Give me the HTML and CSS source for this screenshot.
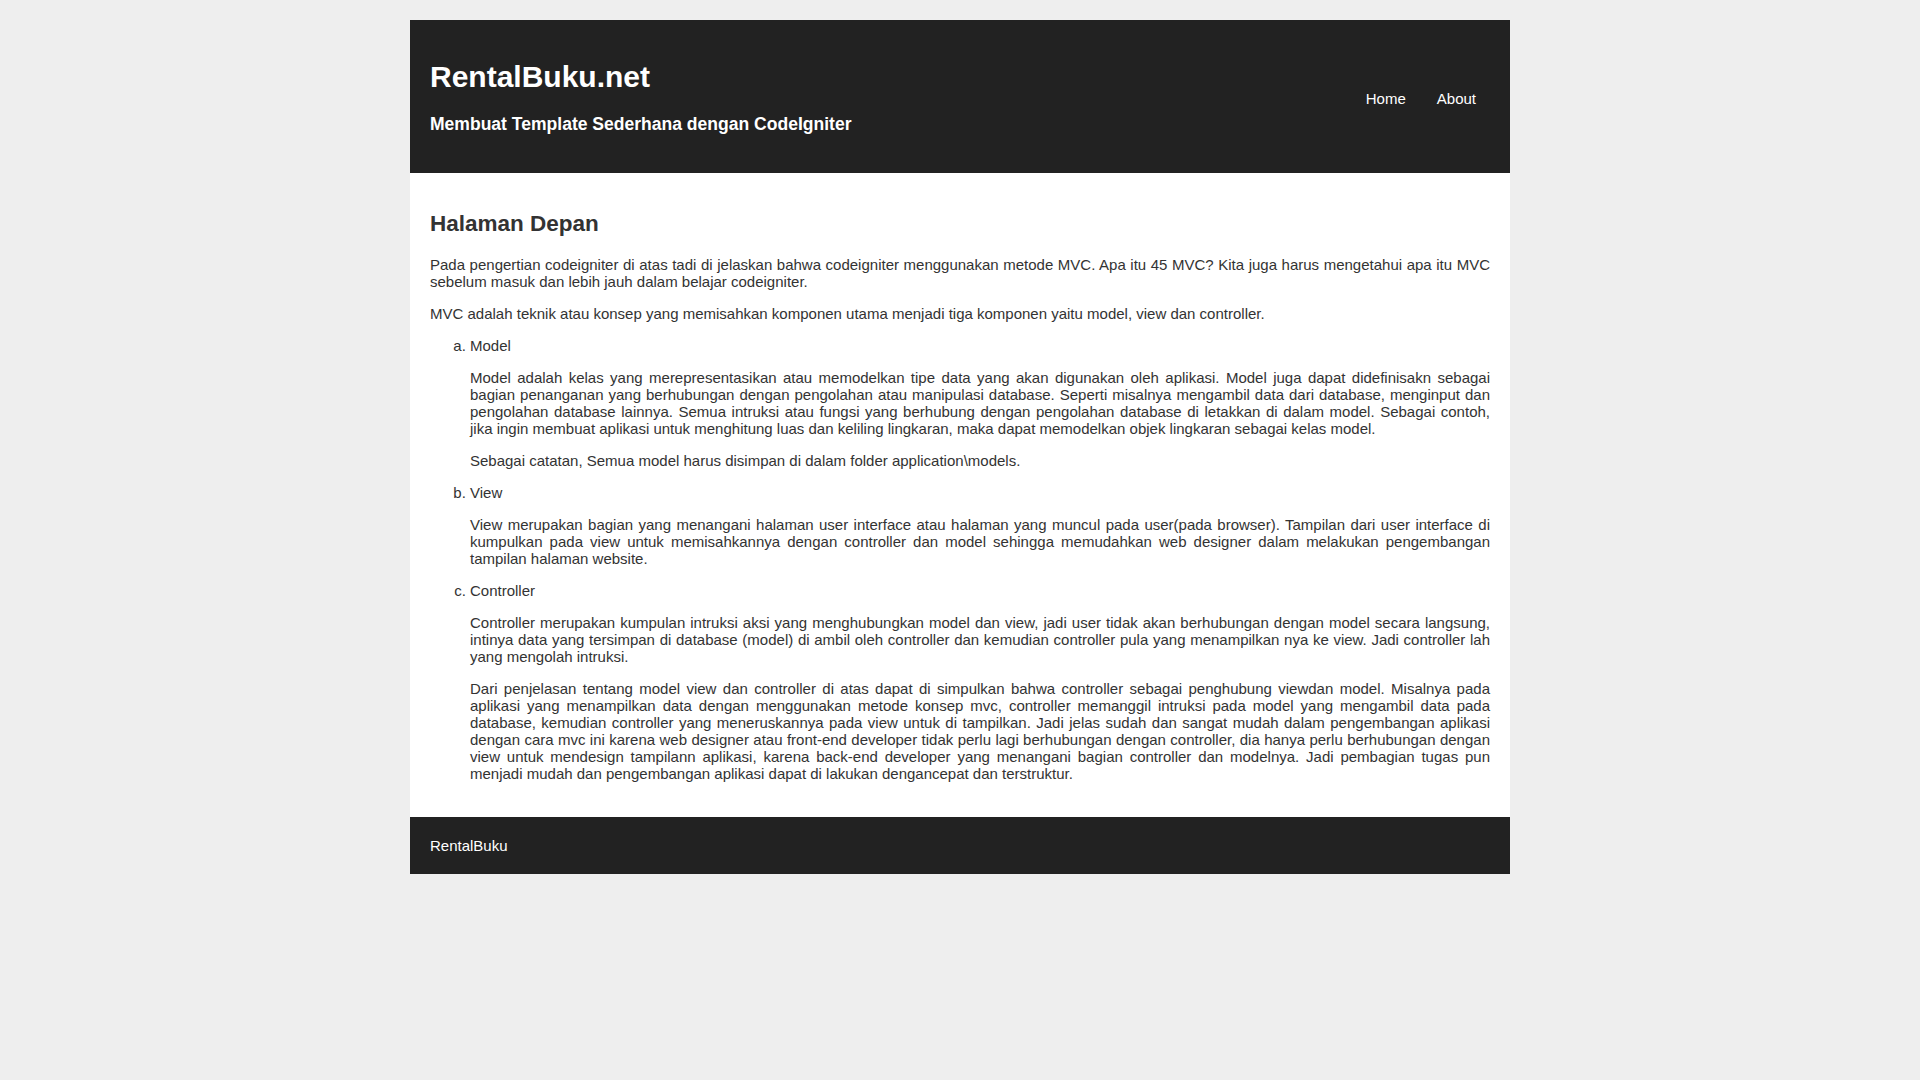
FILE: index.html
```html
<!DOCTYPE html>
<html lang="id">
<head>
<meta charset="utf-8">
<title>RentalBuku.net</title>
<link rel="stylesheet" href="styles.css">
</head>
<body>
<div class="wrapper">
  <header class="site-header">
    <div class="brand">
      <h1 class="brand-title">RentalBuku.net</h1>
      <h3 class="brand-tagline">Membuat Template Sederhana dengan CodeIgniter</h3>
    </div>
    <nav class="site-nav">
      <a href="#" class="nav-link">Home</a>
      <a href="#" class="nav-link">About</a>
    </nav>
  </header>
  <main class="content">
    <h2 class="page-title">Halaman Depan</h2>
    <p>Pada pengertian codeigniter di atas tadi di jelaskan bahwa codeigniter menggunakan metode MVC. Apa itu 45 MVC? Kita juga harus mengetahui apa itu MVC sebelum masuk dan lebih jauh dalam belajar codeigniter.</p>
    <p>MVC adalah teknik atau konsep yang memisahkan komponen utama menjadi tiga komponen yaitu model, view dan controller.</p>
    <ol class="mvc-list">
      <li>Model
        <p>Model adalah kelas yang merepresentasikan atau memodelkan tipe data yang akan digunakan oleh aplikasi. Model juga dapat didefinisakn sebagai bagian penanganan yang berhubungan dengan pengolahan atau manipulasi database. Seperti misalnya mengambil data dari database, menginput dan pengolahan database lainnya. Semua intruksi atau fungsi yang berhubung dengan pengolahan database di letakkan di dalam model. Sebagai contoh, jika ingin membuat aplikasi untuk menghitung luas dan keliling lingkaran, maka dapat memodelkan objek lingkaran sebagai kelas model.</p>
        <p>Sebagai catatan, Semua model harus disimpan di dalam folder application\models.</p>
      </li>
      <li>View
        <p>View merupakan bagian yang menangani halaman user interface atau halaman yang muncul pada user(pada browser). Tampilan dari user interface di kumpulkan pada view untuk memisahkannya dengan controller dan model sehingga memudahkan web designer dalam melakukan pengembangan tampilan halaman website.</p>
      </li>
      <li>Controller
        <p>Controller merupakan kumpulan intruksi aksi yang menghubungkan model dan view, jadi user tidak akan berhubungan dengan model secara langsung, intinya data yang tersimpan di database (model) di ambil oleh controller dan kemudian controller pula yang menampilkan nya ke view. Jadi controller lah yang mengolah intruksi.</p>
        <p>Dari penjelasan tentang model view dan controller di atas dapat di simpulkan bahwa controller sebagai penghubung viewdan model. Misalnya pada aplikasi yang menampilkan data dengan menggunakan metode konsep mvc, controller memanggil intruksi pada model yang mengambil data pada database, kemudian controller yang meneruskannya pada view untuk di tampilkan. Jadi jelas sudah dan sangat mudah dalam pengembangan aplikasi dengan cara mvc ini karena web designer atau front-end developer tidak perlu lagi berhubungan dengan controller, dia hanya perlu berhubungan dengan view untuk mendesign tampilann aplikasi, karena back-end developer yang menangani bagian controller dan modelnya. Jadi pembagian tugas pun menjadi mudah dan pengembangan aplikasi dapat di lakukan dengancepat dan terstruktur.</p>
      </li>
    </ol>
  </main>
  <footer class="site-footer">RentalBuku</footer>
</div>
</body>
</html>
```
FILE: styles.css
```css
html, body {
  margin: 0;
  padding: 0;
  background: #eeeeee;
}
body {
  font-family: "Liberation Sans", Arial, sans-serif;
  font-size: 15px;
  line-height: 17px;
  color: #333333;
}
.wrapper {
  width: 1100px;
  margin: 20px auto 0;
  background: #ffffff;
}
.site-header {
  background: #222222;
  color: #ffffff;
  padding: 20px;
  display: flex;
  justify-content: space-between;
  align-items: center;
}
.brand-title {
  margin: 20px 0;
  font-size: 30px;
  line-height: 34px;
  font-weight: bold;
}
.brand-tagline {
  margin: 17.5px 0;
  font-size: 17.55px;
  line-height: 21px;
  font-weight: bold;
}
.site-nav {
  display: flex;
  gap: 31px;
  padding-right: 14px;
  margin-top: 4px;
}
.nav-link {
  color: #ffffff;
  text-decoration: none;
  font-size: 15px;
}
.content {
  padding: 20px;
}
.page-title {
  font-size: 22.5px;
  line-height: 26px;
  font-weight: bold;
  margin: 18.7px 0;
  color: #333333;
}
.content p {
  margin: 15px 0;
  text-align: justify;
}
.mvc-list {
  list-style: lower-alpha;
  padding-left: 40px;
  margin: 15px 0;
}
.mvc-list li {
  margin: 0;
}
.site-footer {
  background: #222222;
  color: #ffffff;
  padding: 20px;
  font-size: 15px;
}
```
